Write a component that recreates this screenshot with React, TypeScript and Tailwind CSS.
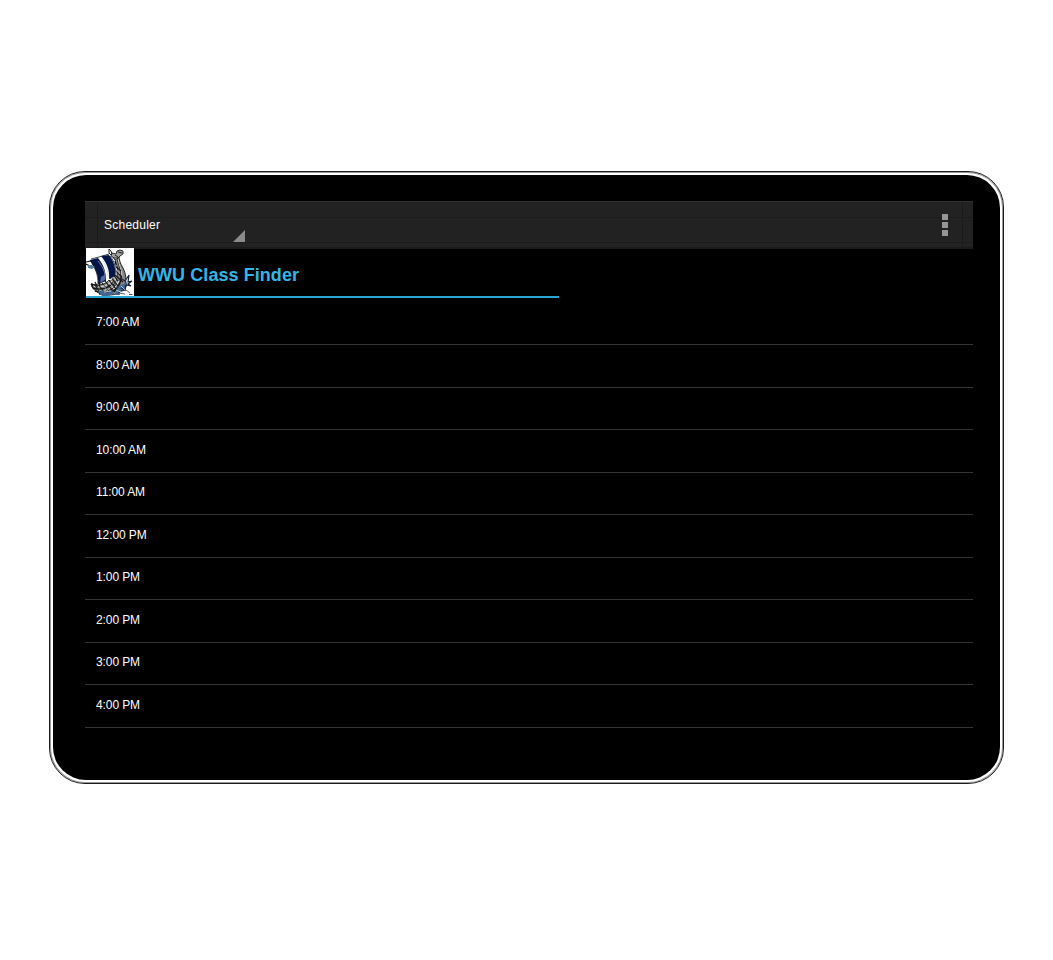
const rows: { time: string; height: string; pad: string }[] = [
  { time: "7:00 AM", height: "h-[43px]", pad: "pt-[12px]" },
  { time: "8:00 AM", height: "h-[43px]", pad: "pt-[12px]" },
  { time: "9:00 AM", height: "h-[42px]", pad: "pt-[11px]" },
  { time: "10:00 AM", height: "h-[43px]", pad: "pt-[12px]" },
  { time: "11:00 AM", height: "h-[42px]", pad: "pt-[11px]" },
  { time: "12:00 PM", height: "h-[43px]", pad: "pt-[12px]" },
  { time: "1:00 PM", height: "h-[42px]", pad: "pt-[11px]" },
  { time: "2:00 PM", height: "h-[43px]", pad: "pt-[12px]" },
  { time: "3:00 PM", height: "h-[42px]", pad: "pt-[11px]" },
  { time: "4:00 PM", height: "h-[43px]", pad: "pt-[12px]" },
];

function VikingLogo() {
  return (
    <svg viewBox="0 0 48 48" className="block size-12 shrink-0" fill="none">
      <rect width="48" height="48" fill="#fff" />
      {/* hull and neck */}
      <path d="M29 8l4-1c0 5 1 8 4 13 3 6 4 12 1 19-2 5-7 8-15 8-8 0-14-3-17-8l-1-3 6 1c7 0 12-3 16-10 2-7 3-13 2-19z" fill="#858585" stroke="#141414" strokeWidth="0.9" />
      <path d="M31 9c1 6 3 9 4 15 1 7-1 14-7 20M29 13c3 7 4 16-2 24M7 40c8 3 15 1 22-7M9 43c8 2 15 0 21-6M13 46c8 0 14-2 18-6" stroke="#141414" strokeWidth="1.4" />
      <path d="M32 11c1 6 4 11 4 18M30 17c2 8 1 14-4 20M7 38c8 2 14 0 19-5M11 42c7 1 13 0 17-4M28 41l5-8" stroke="#ececec" strokeWidth="0.9" />
      <path d="M25 24l7 9M24 28l8 10M22 31l8 10M19 33l8 10M16 35l7 9M12 36l6 8M28 17l7 6M28 21l8 8M29 27l8 7M9 37l4 6" stroke="#171717" strokeWidth="1.2" />
      <path d="M26 26l5 9M22 33l6 8M17 37l5 6M29 20l5 6" stroke="#ddd" strokeWidth="0.7" />
      {/* dragon head */}
      <path d="M23 1l2 1 1 3 3 1 2-4 4-1 2 2 0 4-4 1-3 3-4-1-5-2-1-3z" fill="#fff" />
      <path d="M26 5l4 1 1-3 3-1 3 1v3l-3 2-2 2h-4l-3-2z" fill="#a3a3a3" stroke="#1b1b1b" strokeWidth="0.9" />
      <path d="M23 1v4l2 2M23 1l2 2 1 3M29 7l3 2M32 4l4 1M27 9l2 3" stroke="#202020" strokeWidth="1" />
      {/* striped sail */}
      <path d="M3 12l8-2 6-3h7c5 6 7 13 6 19l-5 6-6 0-7 5c1-7-1-13-5-18z" fill="#fff" />
      <path d="M4 12l8-2c6 7 8 14 8 23l-8 3c1-8-2-14-8-24z" fill="#03164a" />
      <path d="M15 8l8-1c5 7 7 13 6 21l-6 3c1-8-2-16-8-23z" fill="#03164a" />
      <path d="M5 11l8-2 10-3M4 12c6 9 8 15 8 24l8-4M24 8c5 6 6 12 5 19l-5 4" stroke="#111827" strokeWidth="0.8" />
      <path d="M12 13c4 5 7 10 7 15M17 13c3 5 5 10 5 15" stroke="#c2cad7" strokeWidth="0.6" />
      <path d="M0 14l5-1 3 5 3 2M0 16l6 3" stroke="#171717" strokeWidth="1.2" />
      <path d="M2 17l4 0 3 2-3 2-4-1z" fill="#587da8" />
      <path d="M15 29l5-3-1 6-5 3z" fill="#526c9c" />
      {/* stern */}
      <path d="M9 34l2 4-5-2 1 4M14 34l-1 4" stroke="#191919" strokeWidth="1.3" />
      {/* waves */}
      <path d="M12 43l5-1 4 3 5-3 2 4-6 2h-6z" fill="#416792" />
      <path d="M32 39l4-3 3 1 2-4 0 5-3 5-5 1 1 3h-5z" fill="#416792" />
      <path d="M36 31l3 2 4-6-1 7 4-1-4 3 3 2-5-1-1 5-4-2" stroke="#172033" strokeWidth="1.2" />
      <path d="M30 42l7 3M35 38l4 4M18 44l7-1" stroke="#d6e1ed" strokeWidth="0.8" />
      <path d="M35 43l5-1 4 3M32 45l7 1" stroke="#222" strokeWidth="0.7" />
      <path d="M43 46h3l1 1h-4z" fill="#35557c" />
    </svg>
  );
}

function ActionBar() {
  return (
    <header className="relative flex h-12 shrink-0 items-center justify-between border-t border-[#303030] bg-[#222] pl-[19px] pr-[25px] shadow-[inset_0_-2px_0_#1a1a1a]">
      <div className="pointer-events-none absolute inset-y-0 left-3 right-[10px] border-x border-[#1a1a1a]" />
      <div className="pointer-events-none absolute inset-x-0 top-[15px] h-[26px] border-y border-[#1c1c1c]" />
      <button className="relative flex h-full w-[141px] items-center pb-[2px] text-left">
        <svg width="57" height="16" className="block overflow-visible">
          <text x="0" y="12" textLength="56" className="fill-white text-[12px]">Scheduler</text>
        </svg>
        <svg width="12" height="12" className="absolute bottom-[7px] right-0">
          <path d="M12 0v12H0z" fill="#8a8a8a" />
        </svg>
      </button>
      <button className="relative mb-[2px] flex flex-col gap-[2px]" aria-label="More options">
        <span className="size-[6px] bg-[#969696]" />
        <span className="size-[6px] bg-[#969696]" />
        <span className="size-[6px] bg-[#969696]" />
      </button>
    </header>
  );
}

export default function App() {
  return (
    <div className="h-[960px] w-[1053px] bg-white pl-[49px] pt-[171px] font-['Liberation_Sans',sans-serif]">
      <div className="h-[613px] w-[955px] rounded-[36px] border border-[#1c1c1c] bg-white p-[3px] shadow-[inset_0_0_0_1px_#999]">
        <main className="flex h-full flex-col rounded-[33px] bg-black pl-[32px] pr-[27px] pt-[26px]">
          <ActionBar />
          <div className="relative z-10 -mt-px ml-px flex h-[50px] w-[473px] shrink-0 items-start border-b-2 border-[#2aa5d3]">
            <VikingLogo />
            <h1 className="ml-[4px] pt-[13px] leading-7">
              <svg width="163" height="28" className="block overflow-visible">
                <text x="0" y="20" textLength="161" className="fill-[#33b5e5] text-[18px] font-bold">WWU Class Finder</text>
              </svg>
            </h1>
          </div>
          <ul className="mt-[4px]">
            {rows.map((row) => (
              <li key={row.time} className={`${row.height} ${row.pad} border-b border-[#353535] pl-[11px] text-[12px] leading-4 tracking-[-0.1px] text-white`}>
                {row.time}
              </li>
            ))}
          </ul>
        </main>
      </div>
    </div>
  );
}
